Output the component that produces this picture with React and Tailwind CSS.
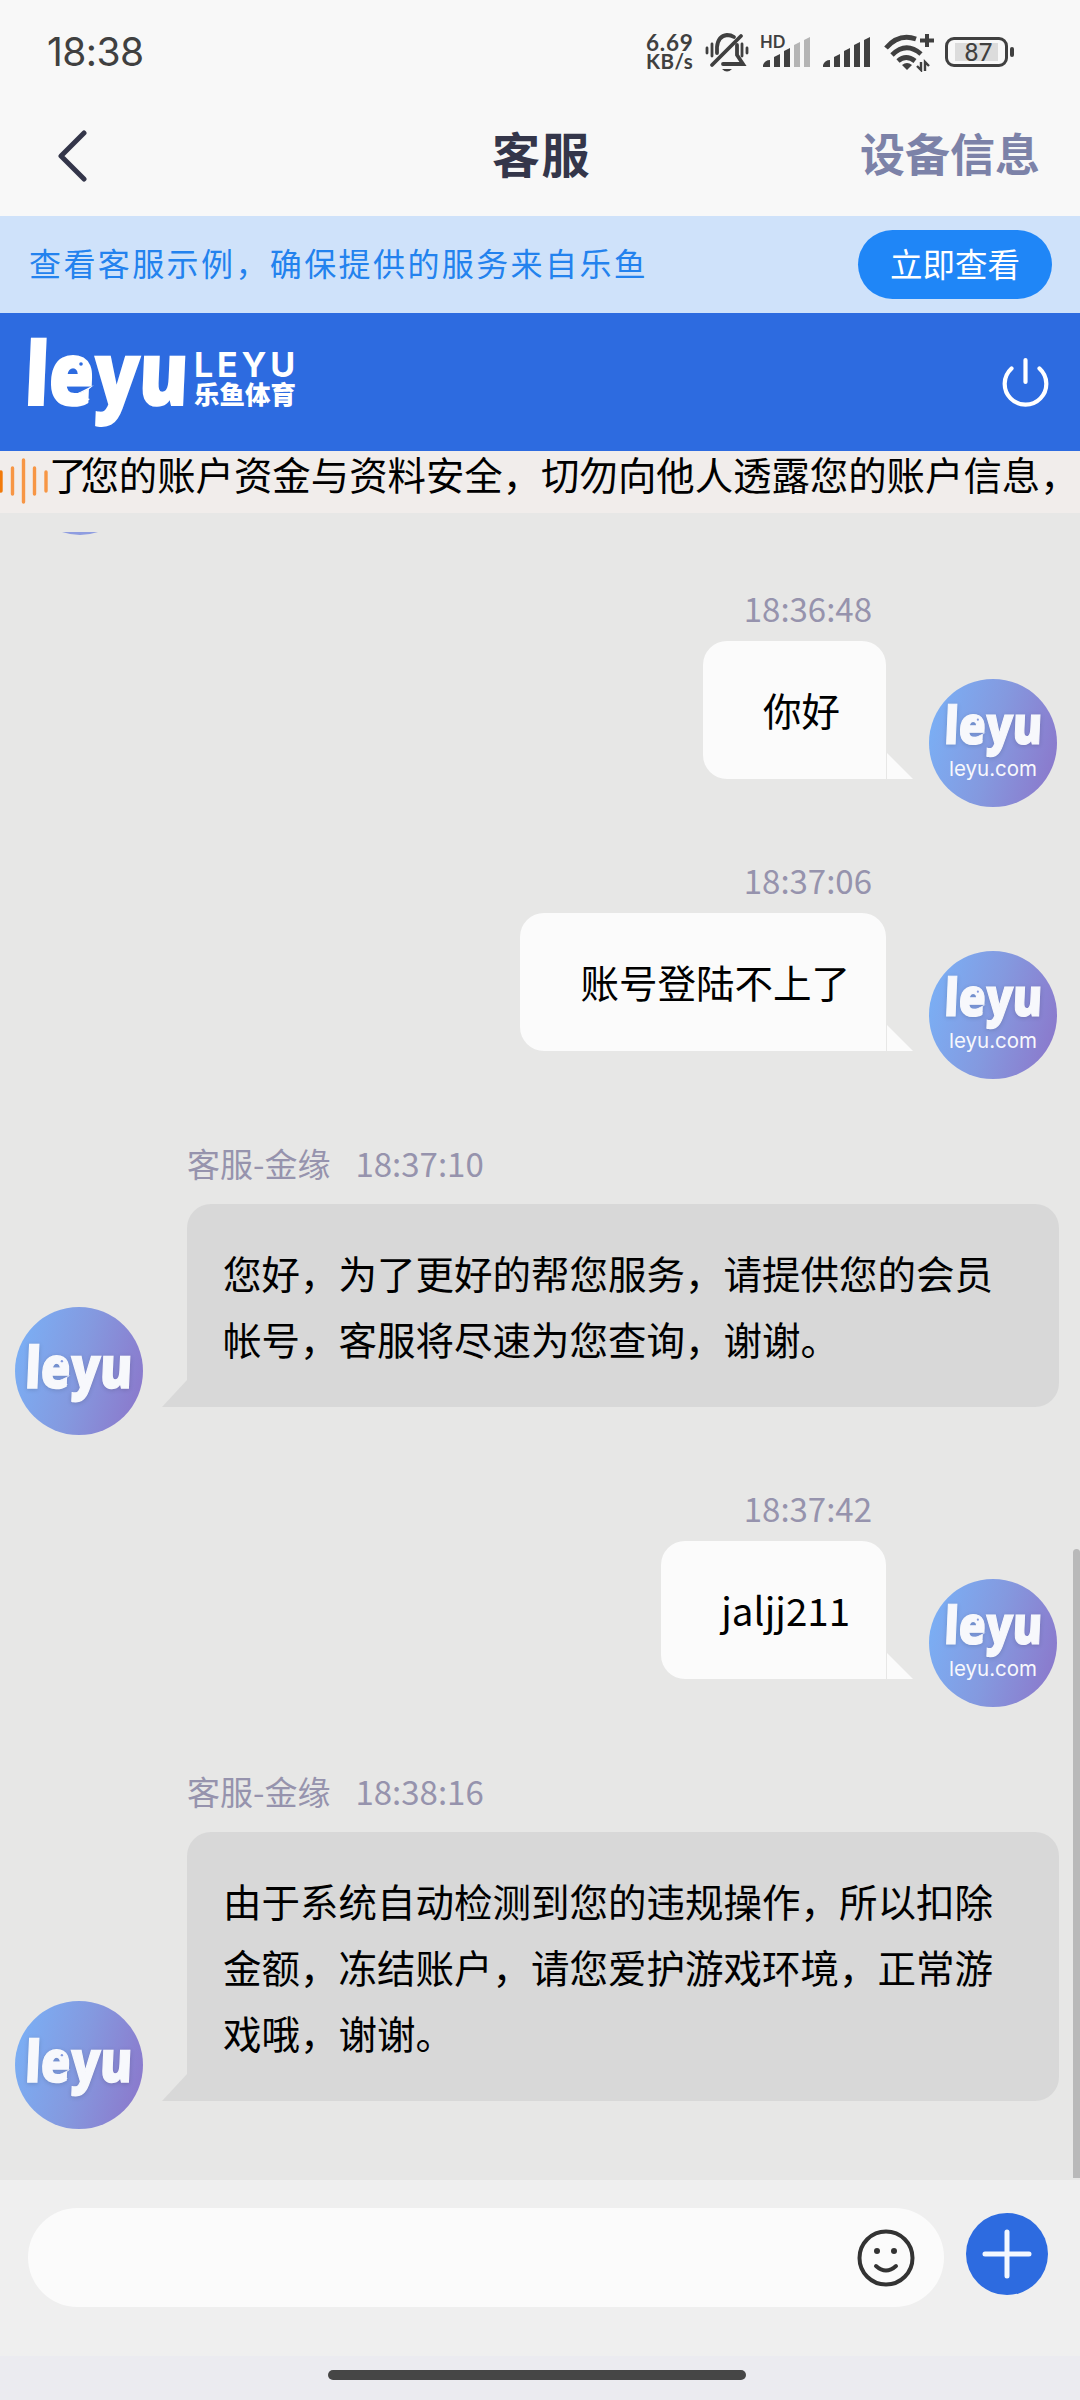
import React from "react";

const messages = [
  { side: "right", time: "18:36:48", text: "你好", pad: "pt-[68px]" },
  { side: "right", time: "18:37:06", text: "账号登陆不上了", pad: "pt-[46px]" },
  {
    side: "left",
    name: "客服-金缘",
    time: "18:37:10",
    text: "您好，为了更好的帮您服务，请提供您的会员帐号，客服将尽速为您查询，谢谢。",
    pad: "pt-[52px]",
  },
  { side: "right", time: "18:37:42", text: "jaljj211", pad: "pt-[74px]" },
  {
    side: "left",
    name: "客服-金缘",
    time: "18:38:16",
    text: "由于系统自动检测到您的违规操作，所以扣除金额，冻结账户，请您爱护游戏环境，正常游戏哦，谢谢。",
    pad: "pt-[52px]",
  },
];

// brand wordmark, the "e" carries a small fish eye and tail
const Wordmark = ({ className, cut }) => (
  <svg viewBox="0 0 158 88" className={className} overflow="visible">
    <text
      x="-1"
      y="67"
      textLength="163"
      lengthAdjust="spacingAndGlyphs"
      transform="skewX(-2.5)"
      className="font-['Open_Sans'] text-[87px] font-extrabold"
      fill="currentColor"
      stroke="currentColor"
      strokeWidth="2"
    >
      leyu
    </text>
    <circle cx="53" cy="26" r="1.8" fill={cut} />
    <path d="M66 47 Q58 55 46 56 Q54 59 62 61 Q56 66 46 68 L40 60 Z" fill="currentColor" />
  </svg>
);

const Avatar = ({ site }) => (
  <div className="flex size-32 shrink-0 flex-col items-center justify-center rounded-full bg-linear-105 from-[#78b2f8] via-[#8499df] to-[#8b74c9] text-[#f7f8fc]">
    <Wordmark
      cut="#8499df"
      className={
        site
          ? "h-[53px] w-[95px] drop-shadow-sm"
          : "mt-1 h-[58px] w-[104px] drop-shadow-sm"
      }
    />
    {site && (
      <span className="mb-[2px] font-[Inter] text-[20.5px] leading-6">leyu.com</span>
    )}
  </div>
);

const Message = ({ side, name, time, text, pad }) => {
  if (side === "right") {
    return (
      <div className={`${pad} pr-[23px]`}>
        <div className="mb-1 flex h-14 items-center justify-end pr-[185px] text-[33px] text-[#9693ad]">
          {time}
        </div>
        <div className="flex items-start justify-end">
          <div className="flex h-[138px] min-w-[183px] items-center rounded-3xl rounded-br-none bg-[#fbfbfb] pr-9 pl-[60px] text-[38.5px] text-black">
            {text}
          </div>
          <svg className="mt-[112px] mr-4 ml-px h-[26px] w-[26px]" viewBox="0 0 26 26">
            <path d="M0 0 L26 26 H0 Z" fill="#fbfbfb" />
          </svg>
          <div className="mt-[38px]">
            <Avatar site />
          </div>
        </div>
      </div>
    );
  }

  return (
    <div className={`${pad} pl-[15px]`}>
      <div className="mb-2 flex h-[65px] items-center gap-[25px] pl-[172px] text-[33px] text-[#9693ad]">
        <span>{name}</span>
        <span>{time}</span>
      </div>
      <div className="flex items-end">
        <div className="-mb-7">
          <Avatar />
        </div>
        <svg className="ml-[19px] h-[27px] w-[25px]" viewBox="0 0 25 27">
          <path d="M25 0 V27 H0 Z" fill="#d8d8d8" />
        </svg>
        <div className="w-[872px] rounded-3xl rounded-bl-none bg-[#d8d8d8] px-9 pt-[35px] pb-9 text-[38.5px] leading-[66px] text-black">
          {text}
        </div>
      </div>
    </div>
  );
};

const Signal = ({ weak }) => (
  <svg className="h-8 w-12" viewBox="0 0 48 32" fill="#404040">
    <path d="M0 31 V29 Q2 24 7 24 V31 Z" />
    <path d="M11 31 V21 L17 18 V31 Z" />
    <path d="M21 31 V15 L27 12 V31 Z" />
    <path d="M31 31 V9 L37 6 V31 Z" fill={weak ? "#b5b5b5" : "#404040"} />
    <path d="M41 31 V4 L47 1 V31 Z" fill={weak ? "#b5b5b5" : "#404040"} />
  </svg>
);

const StatusBar = () => (
  <div className="flex h-[104px] items-center justify-between pr-[66px] pl-[47px] text-[#404040]">
    <span className="font-[Inter] text-[39px] tracking-[-0.6px]">18:38</span>
    <div className="flex items-center">
      <div className="mr-[12px] flex w-[47px] flex-col font-[Lato] text-[20.5px] leading-[19px] font-bold whitespace-nowrap">
        <span className="text-[22.5px] tracking-[0.8px]">6.69</span>
        <span className="tracking-[0.5px]">KB/s</span>
      </div>
      <svg
        className="mr-[14px] h-10 w-11"
        viewBox="0 0 44 40"
        fill="none"
        stroke="currentColor"
        strokeWidth="3.8"
        strokeLinecap="round"
      >
        <path d="M7 33 L36 4" />
        <path d="M12 21 V15 Q13 4 22 3 Q26 3 29 5" />
        <path d="M32 13 V23 L38 32 H18" />
        <path d="M17 37 H27 Q22 42 17 37 Z" fill="currentColor" stroke="none" />
        <path d="M2 16 V21 M7 12 V24 M37 12 V24 M42 16 V21" strokeWidth="2.8" />
      </svg>
      <div className="relative mr-3 flex">
        <span className="absolute -top-[2px] -left-[3px] font-[Lato] text-[16.5px] leading-4 font-bold">
          HD
        </span>
        <Signal weak />
      </div>
      <Signal />
      <svg
        className="ml-[13px] h-10 w-[50px]"
        viewBox="0 0 50 40"
        fill="none"
        stroke="currentColor"
        strokeWidth="4.8"
      >
        <path d="M2 16 Q15 1 32 7" />
        <path d="M8 23 Q22 9 37 22" />
        <path d="M14 29 Q22 22 31 29" />
        <path d="M18 33 Q23 29 28 33 L23 38 Z" fill="currentColor" stroke="none" />
        <path d="M43 2 V15 M36 8.500 H50" strokeWidth="4" />
        <path d="M37 30 V38 L33 34 M41 39 V30 L45 34" strokeWidth="2.4" />
      </svg>
      <div className="ml-[11px] flex h-[30px] w-[63px] items-center justify-center rounded-[9px] border-3 border-[#404040]">
        <div className="flex h-[18px] w-[43px] items-center justify-center bg-[#dcdcdc] pl-1 font-[Lato] text-[24px] leading-none font-medium">
          87
        </div>
      </div>
      <div className="ml-[2px] h-[10px] w-[4px] rounded-full bg-[#404040]" />
    </div>
  </div>
);

const App = () => {
  return (
    <div className="flex h-[2400px] w-[1080px] flex-col overflow-hidden bg-[#f8f8f8] font-['Noto_Sans_CJK_SC',sans-serif]">
      <StatusBar />

      <nav className="grid h-28 grid-cols-3 items-center px-10 pb-2">
        <svg
          className="ml-4 h-[52px] w-8"
          viewBox="0 0 32 52"
          fill="none"
          stroke="#34364a"
          strokeWidth="5"
          strokeLinecap="round"
          strokeLinejoin="round"
        >
          <path d="M28 3 L5 26 L28 49" />
        </svg>
        <h1 className="pb-2 pl-[3px] text-center text-[48px] font-bold tracking-[1.5px] text-[#34364a]">
          客服
        </h1>
        <span className="pb-[6px] text-right text-[45px] font-bold text-[#7c82a8]">
          设备信息
        </span>
      </nav>

      <div className="flex h-[97px] shrink-0 items-center justify-between bg-[#cfe2fa] pr-7 pl-[29px]">
        <p className="pb-[6px] text-[32px] tracking-[2.4px] text-[#2382ee]">
          查看客服示例，确保提供的服务来自乐鱼
        </p>
        <button className="h-[69px] w-[194px] rounded-full bg-[#1f86f7] pb-[3px] text-[32.5px] text-white">
          立即查看
        </button>
      </div>

      <header className="flex h-[138px] shrink-0 items-center justify-between bg-[#2d6be0] pr-[31px] pl-7 text-white">
        <div className="flex items-center gap-2">
          <Wordmark cut="#2d6be0" className="h-[88px] w-[158px]" />
          <div className="flex flex-col pb-[6px]">
            <span className="font-[Inter] text-[34px] leading-7 font-bold tracking-[3.8px]">
              LEYU
            </span>
            <span className="text-[25.5px] leading-7 font-black">乐鱼体育</span>
          </div>
        </div>
        <svg
          className="h-[50px] w-[47px]"
          viewBox="0 0 47 50"
          fill="none"
          stroke="currentColor"
          strokeWidth="4.2"
          strokeLinecap="round"
        >
          <path d="M9.500 11.500 A20.800 20.800 0 1 0 37.500 11.500" />
          <path d="M23.500 3 V25" />
        </svg>
      </header>

      <div className="flex h-[62px] shrink-0 items-start bg-[#f1edeb]">
        <svg
          className="mt-1 h-[52px] w-[49px] shrink-0"
          viewBox="0 0 49 52"
          stroke="#f79645"
          strokeWidth="3.4"
          strokeLinecap="round"
        >
          <path d="M1 17 V36" stroke="#f27a0a" />
          <path d="M12.500 13 V39 M23.500 5 V47 M34.500 13 V39 M46 17 V36" />
        </svg>
        <p className="text-[38.4px] leading-[44px] whitespace-nowrap text-black">
          <span className="tracking-[-7px]">了</span>
          您的账户资金与资料安全，切勿向他人透露您的账户信息，
        </p>
      </div>

      <main className="relative h-[1667px] shrink-0 overflow-hidden bg-[#e7e7e6]">
        {/* bottom edge of the previous avatar */}
        <svg className="absolute top-[19px] left-[61px] h-1 w-10" viewBox="0 0 40 4">
          <path d="M1 0 H37 Q19 6 1 0" fill="#8f9de0" />
        </svg>
        {messages.map((message) => (
          <Message key={message.time} {...message} />
        ))}
        <div className="absolute right-0 bottom-[2px] h-[629px] w-[7px] rounded-t-full bg-[#b9b9b9]" />
      </main>

      <footer className="flex h-44 shrink-0 items-start bg-[#efefef] pt-7 pr-8 pl-7">
        <div className="flex h-[99px] w-[916px] items-center justify-end rounded-full bg-[#fbfbfb] pr-[29px]">
          <svg
            className="size-[58px]"
            viewBox="0 0 58 58"
            fill="none"
            stroke="#333"
            strokeWidth="4"
            strokeLinecap="round"
          >
            <circle cx="29" cy="29" r="26.5" />
            <circle cx="20" cy="22" r="3" fill="#333" stroke="none" />
            <circle cx="37" cy="22" r="3" fill="#333" stroke="none" />
            <path d="M19 37 Q29 46 39 37" />
          </svg>
        </div>
        <button className="mt-[5px] ml-[22px] flex size-[82px] items-center justify-center rounded-full bg-[#2d6be0]">
          <svg
            className="size-[50px]"
            viewBox="0 0 50 50"
            stroke="#f3f7ff"
            strokeWidth="5"
            strokeLinecap="round"
          >
            <path d="M25 3 V47 M3 25 H47" />
          </svg>
        </button>
      </footer>

      <div className="flex h-11 shrink-0 justify-center bg-[#ebebf0] pt-[14px] pr-[6px]">
        <div className="h-[10px] w-[418px] rounded-full bg-[#464646]" />
      </div>
    </div>
  );
};

export default App;
